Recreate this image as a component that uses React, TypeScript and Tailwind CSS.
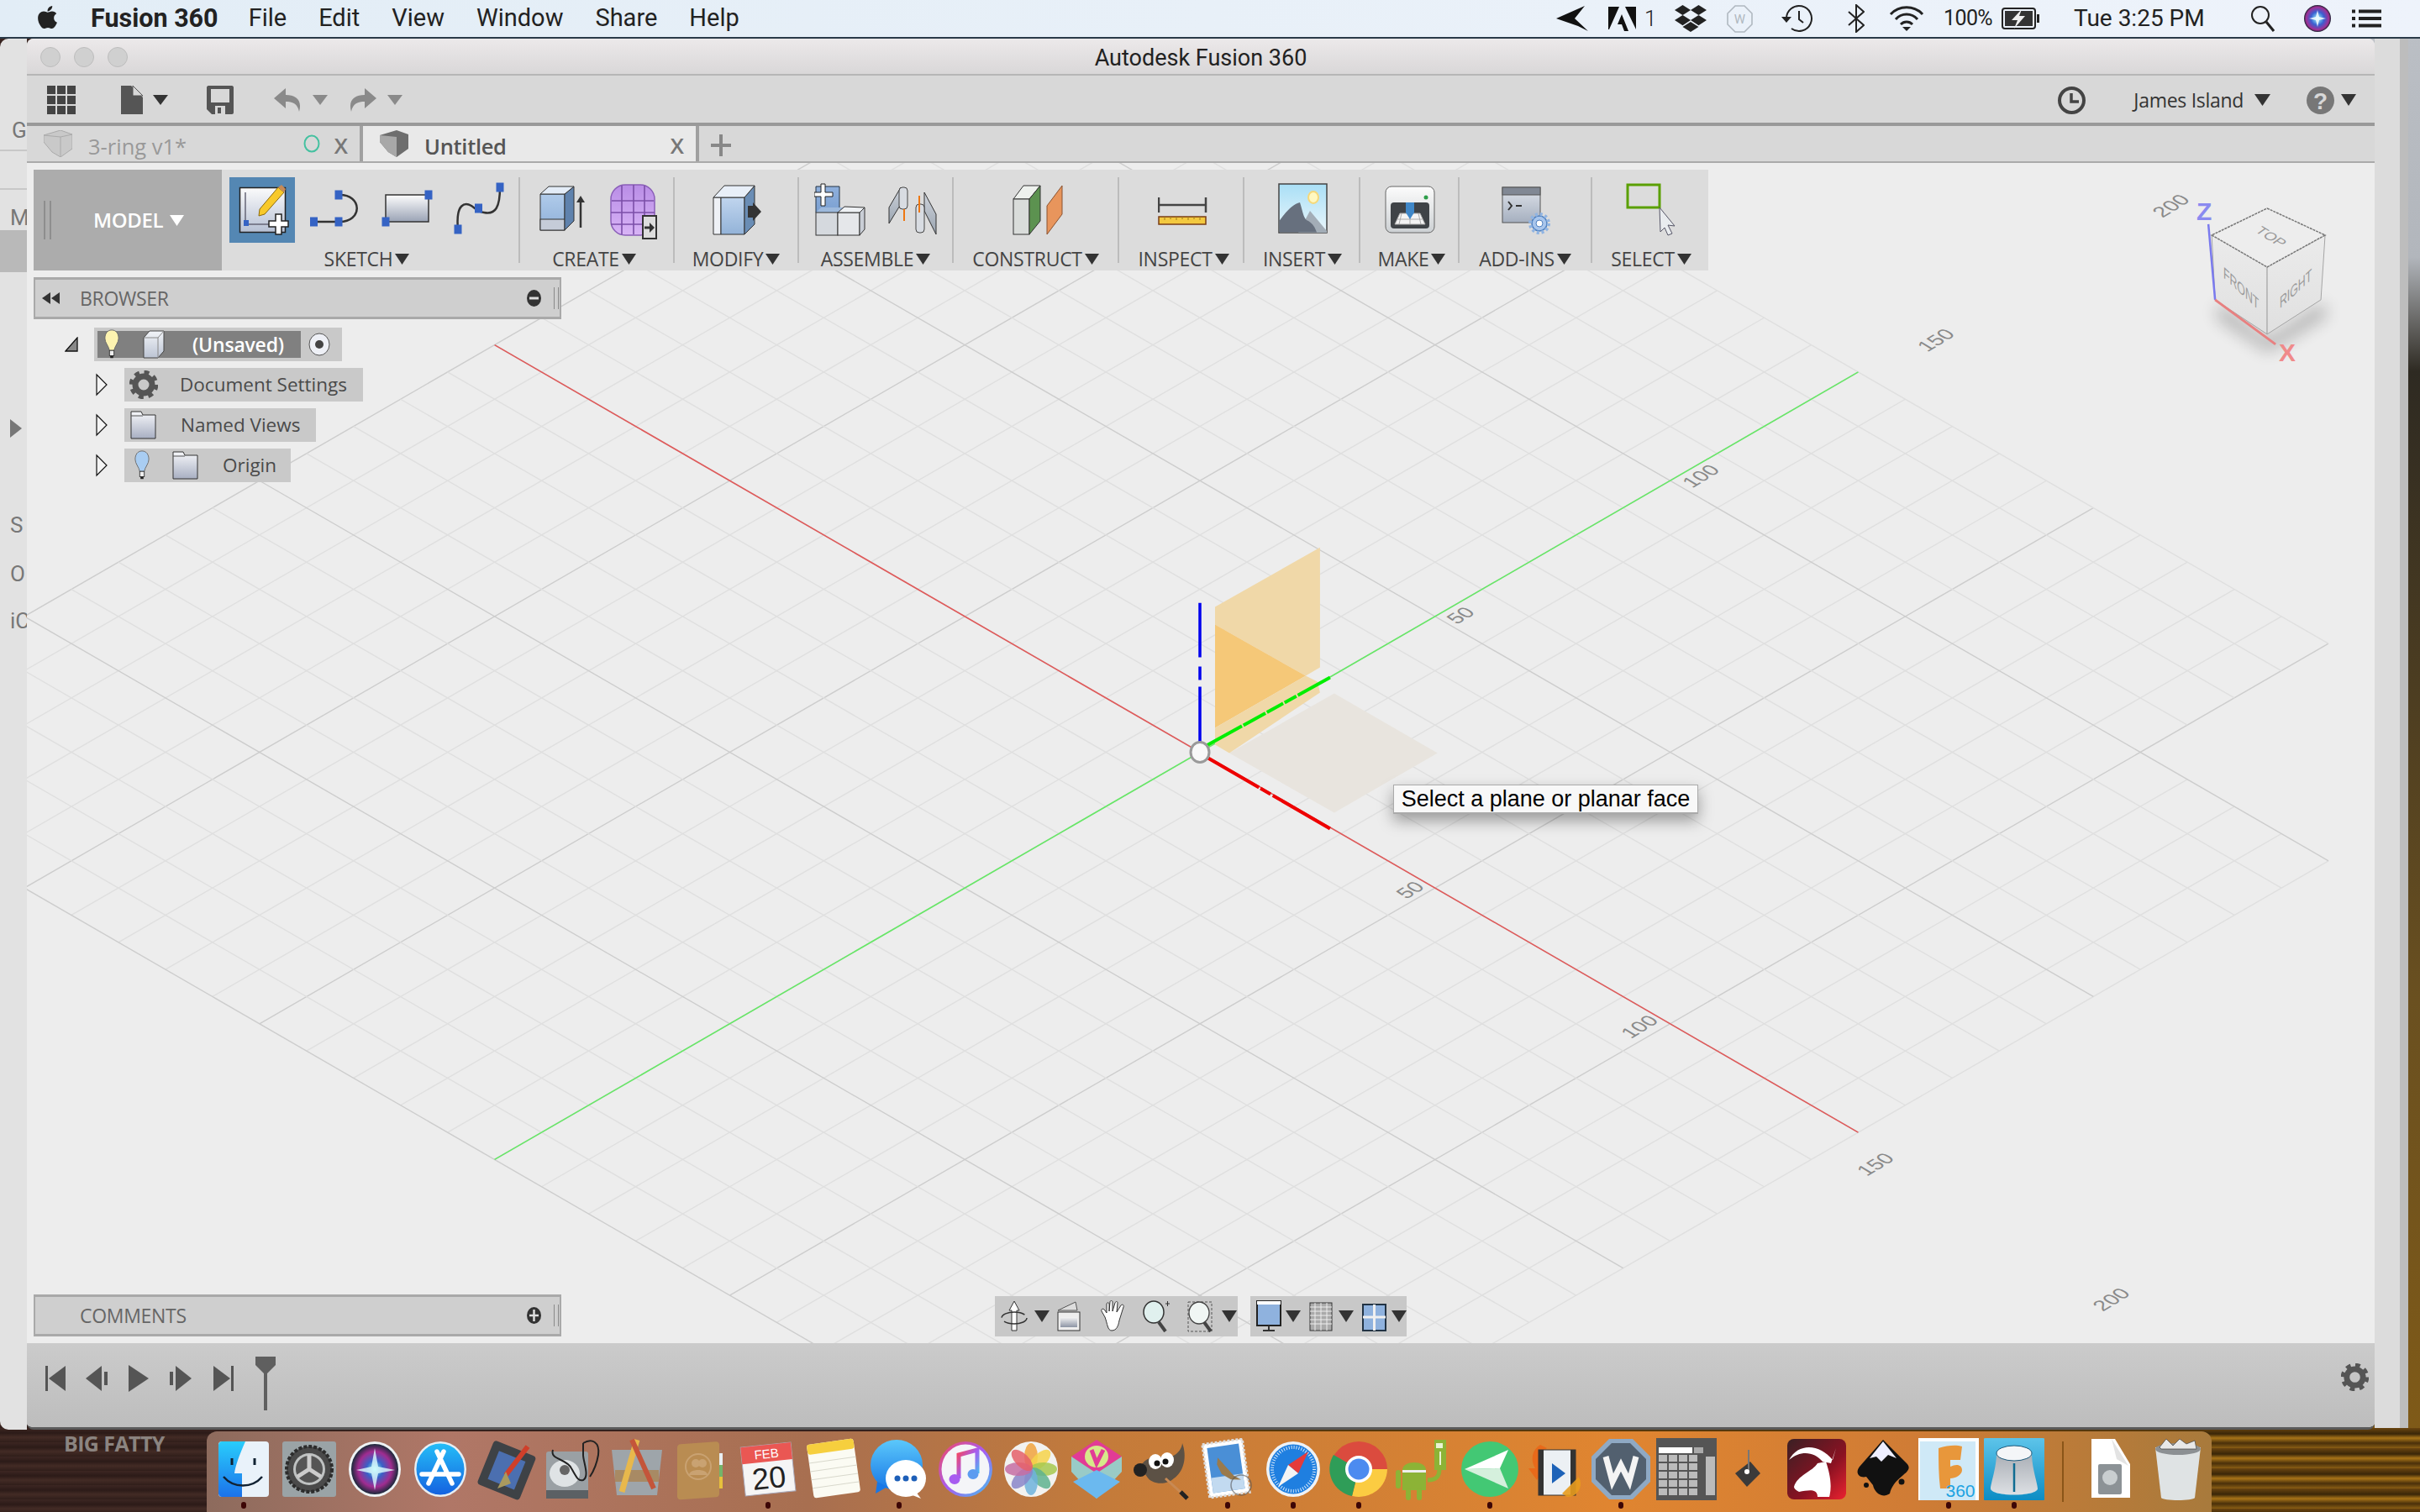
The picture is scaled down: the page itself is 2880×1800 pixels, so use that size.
import React from "react";
import { FaApple, FaDropbox } from "react-icons/fa";

const sans = "font-['Open_Sans','Liberation_Sans',sans-serif]";
const Tri = ({ w = 18, h = 12, c = "#333", cls = "" }: { w?: number; h?: number; c?: string; cls?: string }) => (
  <svg width={w} height={h} viewBox="0 0 18 12" preserveAspectRatio="none" className={cls}><polygon points="0,0 18,0 9,12" fill={c} /></svg>
);

const P = (i: number, j: number) => [1428 + 56 * (i + j), 896 + 32.35 * (i - j)];

function Canvas3D() {
  const lines: React.ReactNode[] = [];
  for (let i = -15; i <= 14; i++) {
    const jMax = i > 10 ? 10 : 14;
    const a = P(i, -15), b = P(i, jMax);
    lines.push(<line key={"i" + i} x1={a[0]} y1={a[1]} x2={b[0]} y2={b[1]} stroke={i % 5 === 0 ? "#cdcdcd" : "#dfdfdf"} strokeWidth={1.4} />);
  }
  for (let j = -15; j <= 14; j++) {
    const iMax = j > 10 ? 10 : 14;
    const a = P(-15, j), b = P(iMax, j);
    lines.push(<line key={"j" + j} x1={a[0]} y1={a[1]} x2={b[0]} y2={b[1]} stroke={j % 5 === 0 ? "#cdcdcd" : "#dfdfdf"} strokeWidth={1.4} />);
  }
  const lab = (t: string, x: number, y: number) => (
    <text key={t + x} transform={`matrix(.82 -.5 .82 .5 ${x} ${y})`} fontSize="25" fill="#8a8a8a" textAnchor="middle" dominantBaseline="middle" fontFamily="Liberation Sans">{t}</text>
  );
  const r1 = P(-15, 0), r2 = P(14, 0), g1 = P(0, -15), g2 = P(0, 14);
  return (
    <svg className="absolute inset-0 w-full h-full" viewBox="32 194 2794 1406">
      {lines}
      <line x1={r1[0]} y1={r1[1]} x2={r2[0]} y2={r2[1]} stroke="#e05a5a" strokeWidth="1.6" />
      <line x1={g1[0]} y1={g1[1]} x2={g2[0]} y2={g2[1]} stroke="#66e866" strokeWidth="1.6" />
      {lab("50", 1740, 734)}{lab("100", 2026, 568)}{lab("150", 2306, 406)}{lab("200", 2586, 246)}
      {lab("50", 1680, 1061)}{lab("100", 1953, 1224)}{lab("150", 2234, 1388)}{lab("200", 2515, 1549)}
      <polygon points="1588,826 1711,897 1588,968 1463,897" fill="#e8e4de" />
      <polygon points="1446,723 1571,652 1571,795 1554,805 1446,744" fill="#f0d8a8" />
      <polygon points="1446,744 1554,805 1446,867" fill="#f5c878" />
      <polygon points="1446,867 1554,805 1568,812 1571,825 1463,897 1446,887" fill="#f0d8a8" />
      <line x1="1428" y1="718" x2="1428" y2="885" stroke="#0000ee" strokeWidth="3.5" strokeDasharray="65 11 16 8 80" />
      <line x1="1436" y1="888" x2="1583" y2="807" stroke="#00ee00" strokeWidth="4" strokeDasharray="48 2 30 2 22 2 16 2 60" />
      <line x1="1436" y1="902" x2="1583" y2="987" stroke="#ee0000" strokeWidth="4" strokeDasharray="72 2 14 3 90" />
      <ellipse cx="1428" cy="896" rx="11" ry="12" fill="#f8f8f8" stroke="#9a9a9a" strokeWidth="3" />
      {/* nav cube */}
      <defs>
        <filter id="cb" x="-50%" y="-50%" width="200%" height="200%"><feGaussianBlur stdDeviation="10" /></filter>
        <linearGradient id="cf" x1="0" y1="0" x2="0" y2="1"><stop offset="0" stopColor="#ebebeb" /><stop offset="1" stopColor="#e0e0e0" /></linearGradient>
      </defs>
      <polygon points="2642,362 2699,405 2765,362 2770,375 2700,418 2640,378" fill="#000" opacity=".3" filter="url(#cb)" />
      <polygon points="2699,318 2633,280 2637,357 2699,398" fill="url(#cf)" stroke="#a5a5a5" strokeWidth="1" />
      <polygon points="2699,318 2768,280 2763,357 2699,398" fill="url(#cf)" stroke="#a5a5a5" strokeWidth="1" />
      <polygon points="2699,248 2768,280 2699,318 2633,280" fill="#ededed" stroke="#777" strokeWidth="1.5" strokeDasharray="3 1" />
      <line x1="2629" y1="267" x2="2637" y2="357" stroke="#7a7aee" strokeWidth="2.5" />
      <line x1="2637" y1="357" x2="2709" y2="410" stroke="#e88080" strokeWidth="3" />
      <text transform="matrix(.8 .5 -.7 .5 2699 285)" fontSize="19" fill="#9a9a9a" textAnchor="middle" fontFamily="Liberation Sans">TOP</text>
      <text transform="matrix(.65 .6 0 1 2668 350)" fontSize="19" fill="#9a9a9a" textAnchor="middle" fontFamily="Liberation Sans">FRONT</text>
      <text transform="matrix(.65 -.6 0 1 2733 350)" fontSize="19" fill="#9a9a9a" textAnchor="middle" fontFamily="Liberation Sans">RIGHT</text>
      <text x="2624" y="262" fontSize="30" fontWeight="bold" fill="#8a8af0" textAnchor="middle" fontFamily="Liberation Sans">Z</text>
      <text x="2723" y="430" fontSize="30" fontWeight="bold" fill="#f08a8a" textAnchor="middle" fontFamily="Liberation Sans">X</text>
    </svg>
  );
}

/* ---------------- ribbon icons (local y 0-78) ---------------- */
const Sq = ({ x, y, s = 9 }: { x: number; y: number; s?: number }) => <rect x={x - s / 2} y={y - s / 2 - 1} width={s} height={s + 2} fill="#3563c4" />;
const I = ({ w = 60, children }: { w?: number; children: React.ReactNode }) => <svg width={w} height={78} viewBox={`0 0 ${w} 78`} className="shrink-0">{children}</svg>;
const G = ({ id, a, b }: { id: string; a: string; b: string }) => (
  <defs><linearGradient id={id} x1="0" y1="0" x2="0" y2="1"><stop offset="0" stopColor={a} /><stop offset="1" stopColor={b} /></linearGradient></defs>
);

const SketchNew = () => (
  <div className="w-[78px] h-[78px] bg-[#5487b3] shrink-0">
    <svg width={78} height={78} viewBox="0 0 78 78">
      <G id="sk" a="#fbfbfb" b="#b6c0d4" />
      <rect x="12.5" y="12.5" width="54" height="53" fill="url(#sk)" stroke="#222" strokeWidth="1.5" />
      <path d="M19 18V56H52" fill="none" stroke="#667" strokeWidth="1.5" />
      <rect x="17" y="51" width="6" height="7" fill="#3563c4" />
      <polygon points="36,38 58,12 65,18 42,44 35,46" fill="#f8c92a" stroke="#8a6a10" strokeWidth="1" />
      <polygon points="58,12 62,9 67,14 65,18" fill="#c68a58" />
      <path d="M55 44h7v8h8v7h-8v9h-7v-9h-8v-7h8z" fill="#fff" stroke="#222" strokeWidth="1.5" />
    </svg>
  </div>
);
const ArcI = () => (<I w={75}><path d="M13 53H43M43 21C72 20 72 54 43 53" fill="none" stroke="#333" strokeWidth="2.5" /><Sq x={13.5} y={53} /><Sq x={43} y={53} /><Sq x={43} y={21} /></I>);
const RectI = () => (<I w={74}><G id="rc" a="#fdfdfd" b="#9aa3b5" /><rect x="11" y="21" width="51" height="32" fill="url(#rc)" stroke="#333" strokeWidth="1.5" /><Sq x={62} y={21} /><Sq x={11} y={53} /></I>);
const SplineI = () => (<I w={75}><path d="M11 62C8 30 20 30 27 34C33 38 35 41 42 42C56 45 61 35 61 12" fill="none" stroke="#333" strokeWidth="2.5" /><Sq x={61} y={12} /><Sq x={35.5} y={37} /><Sq x={11} y={62} /></I>);
const BoxI = () => (<I><G id="bx" a="#b0cbea" b="#8fb0d8" />
  <polygon points="1,20 30,20 30,63 1,63" fill="url(#bx)" stroke="#333" /><rect x="1" y="50" width="29" height="13" fill="#c5ccd8" stroke="#333" />
  <polygon points="30,20 41,11 41,52 30,63" fill="#5f82ad" stroke="#333" /><polygon points="1,20 11,11 41,11 30,20" fill="#e3ecf7" stroke="#333" />
  <path d="M49 60V28" stroke="#333" strokeWidth="2.5" /><polygon points="44,30 49,22 54,30" fill="#333" /></I>);
const PurpleI = () => (<I><G id="pu" a="#b98de6" b="#d8b4f6" />
  <rect x="1" y="9" width="52" height="60" rx="17" fill="url(#pu)" stroke="#8a5fb8" strokeWidth="1.5" />
  <path d="M2 28H52M1 42H53M1 56H45M14 10V68M28 9V68M41 10V60" stroke="#7b4fa8" strokeWidth="1.6" fill="none" />
  <rect x="39" y="46" width="16" height="27" fill="#ddd" stroke="#333" strokeWidth="2" /><path d="M41 60H48" stroke="#333" strokeWidth="3" /><polygon points="47,54 53,60 47,66" fill="#333" /></I>);
const ModifyI = () => (<I><G id="mo" a="#c0d5ee" b="#93b3d8" />
  <polygon points="1,24 10,24 10,68 1,68" fill="#eef1f6" stroke="#333" /><polygon points="10,24 38,24 38,68 10,68" fill="url(#mo)" stroke="#333" />
  <polygon points="38,24 50,10 50,56 38,68" fill="#6a8db5" stroke="#333" /><polygon points="1,24 14,10 50,10 38,24" fill="#e8eff8" stroke="#333" />
  <rect x="42" y="34" width="8" height="14" fill="#333" /><polygon points="48,30 58,41 48,52" fill="#333" /></I>);
const AssembleI = () => (<I w={87}><G id="as" a="#8fb0dc" b="#7ba0d2" />
  <polygon points="2,11 30,11 30,42 2,42" fill="url(#as)" stroke="#234" /><polygon points="2,42 30,42 38,36 8,36" fill="#9db9dc" />
  <rect x="2" y="42" width="26" height="27" fill="#d5d9de" stroke="#333" /><rect x="28" y="42" width="26" height="27" fill="#e5e7ea" stroke="#333" /><polygon points="54,42 60,36 60,62 54,69" fill="#c9ced6" stroke="#333" />
  <polygon points="28,42 36,35 60,36 54,42" fill="#eef1f4" stroke="#333" />
  <path d="M8 8h5v10h9v5h-9v11H8V23H0v-5h8z" fill="#fff" stroke="#222" /></I>);
const JointI = () => (<I w={60}><G id="jn" a="#cfd4dc" b="#9aa4b0" />
  <polygon points="2,55 16,32 16,12 2,36" fill="url(#jn)" stroke="#333" /><rect x="14" y="12" width="10" height="26" rx="4" fill="#d8dce2" stroke="#444" />
  <polygon points="58,68 44,40 44,18 58,44" fill="url(#jn)" stroke="#333" /><rect x="34" y="32" width="10" height="34" rx="4" fill="#d8dce2" stroke="#444" />
  <path d="M38 22V42M20 38V52" stroke="#ee7711" strokeWidth="2" fill="none" /></I>);
const ConstructI = () => (<I><polygon points="1,26 13,10 33,10 20,26" fill="#eef1ee" stroke="#333" /><rect x="1" y="26" width="19" height="42" fill="#d9dcda" stroke="#333" />
  <polygon points="20,26 33,10 33,52 20,68" fill="#5c9250" stroke="#333" /><polygon points="41,34 59,10 59,44 41,68" fill="#e8955c" stroke="#8a5230" /></I>);
const InspectI = () => (<I><path d="M1 24V42M57 24V42M1 33H57" stroke="#444" strokeWidth="2.5" fill="none" /><rect x="1" y="43" width="56" height="9" fill="#f3c93f" stroke="#7a3d14" strokeWidth="1.5" transform="translate(0,4)" /><path d="M8 47v4M15 47v3M22 47v4M29 47v3M36 47v4M43 47v3M50 47v4" stroke="#a07c1a" /></I>);
const InsertI = () => (<I><G id="sky" a="#a9dff6" b="#eaf6fb" /><rect x="1" y="8" width="57" height="58" fill="url(#sky)" stroke="#444" strokeWidth="1.5" />
  <ellipse cx="42" cy="24" rx="6" ry="7" fill="#fff8c0" stroke="#f5d87a" strokeWidth="2" /><polygon points="38,40 58,64 58,66 24,66" fill="#a3adb7" /><path d="M1.5 65.5V52C10 40 18 32 26 30C30 42 30 50 36 52C42 56 44 60 46 65.5Z" fill="#67707e" /></I>);
const MakeI = () => (<I><G id="mk" a="#fcfcfc" b="#ccd0d3" /><rect x="1" y="11" width="58" height="55" rx="7" fill="url(#mk)" stroke="#666" />
  <rect x="7" y="30" width="46" height="31" rx="4" fill="#3f4347" /><circle cx="49" cy="24" r="2.5" fill="#2e9e4a" />
  <polygon points="12,56 18,43 42,43 48,56" fill="#f4f4f4" stroke="#aaa" /><path d="M15 50H45M20 43L17 56M30 43V56M40 43L43 56" stroke="#aaa" /><polygon points="25,30 35,30 35,42 30,50 25,42" fill="#3f87c8" /></I>);
const AddinsI = () => (<I><G id="ad" a="#dfe3ea" b="#a5afbf" /><rect x="1" y="12" width="45" height="42" fill="url(#ad)" stroke="#555" /><rect x="1" y="12" width="45" height="9" fill="#818894" stroke="#555" />
  <path d="M8 29L12 34L8 39M17 34H24" fill="none" stroke="#333" strokeWidth="2" />
  <g transform="translate(45,55)"><circle r="9" fill="#a9c6ec" stroke="#4d7fbf" strokeWidth="1.5" /><circle r="11" fill="none" stroke="#90b4e2" strokeWidth="4" strokeDasharray="3 2.8" /><circle r="4" fill="#fff" stroke="#4d7fbf" /></g></I>);
const SelectI = () => (<I><rect x="2" y="9" width="38" height="27" fill="none" stroke="#5aa000" strokeWidth="3" />
  <polygon points="40,36 58,58 50,57 55,67 50,69 46,60 41,65" fill="#e9ecef" stroke="#556" /></I>);

function Group({ w, label, pl, children, lx = "" }: { w: string; label: string; pl: string; children?: React.ReactNode; lx?: string }) {
  return (
    <div className={`${w} h-full flex flex-col pt-[9px] shrink-0`}>
      <div className={`${pl} h-[78px] flex items-start`}>{children}</div>
      <div className={`mt-[6px] h-[26px] flex justify-center items-center gap-[3px] text-[23px] text-[#444] leading-none tracking-[-0.3px] ${sans} ${lx}`}>
        <span>{label}</span><Tri w={17} h={13} c="#333" />
      </div>
    </div>
  );
}
const Sep = () => <div className="w-[2px] h-[102px] bg-[#bcbcbc] shrink-0" />;

function Ribbon() {
  return (
    <div className="flex items-center h-[120px] w-[1993px] bg-[#dcdcdc] shrink-0">
      <div className="w-[224px] h-full bg-[#acacac] flex items-center shrink-0 pl-[12px]">
        <div className="w-[9px] h-[46px] border-x-2 border-[#8e8e8e]" />
        <div className={`ml-[50px] flex items-center gap-[8px] text-white font-semibold text-[24px] ${sans} tracking-[-0.4px]`}>MODEL<Tri w={17} h={13} c="#fff" /></div>
      </div>
      <Group w="w-[353px]" label="SKETCH" pl="pl-[9px]" lx="-translate-x-[4px]">
        <SketchNew /><div className="ml-[9px]"><ArcI /></div><div className="ml-[13px]"><RectI /></div><div className="ml-[12px]"><SplineI /></div>
      </Group><Sep />
      <Group w="w-[182px]" label="CREATE" pl="pl-[23px]" lx="-translate-x-[3px]"><BoxI /><div className="ml-[24px]"><PurpleI /></div></Group><Sep />
      <Group w="w-[146px]" label="MODIFY" pl="pl-[45px]" lx="translate-x-[0px]"><ModifyI /></Group><Sep />
      <Group w="w-[182px]" label="ASSEMBLE" pl="pl-[18px]"><AssembleI /><JointI /></Group><Sep />
      <Group w="w-[195px]" label="CONSTRUCT" pl="pl-[70px]" lx="translate-x-[0px]"><ConstructI /></Group><Sep />
      <Group w="w-[147px]" label="INSPECT" pl="pl-[46px]" lx="translate-x-[3px]"><InspectI /></Group><Sep />
      <Group w="w-[136px]" label="INSERT" pl="pl-[40px]" lx="translate-x-[1px]"><InsertI /></Group><Sep />
      <Group w="w-[116px]" label="MAKE" pl="pl-[29px]" lx="translate-x-[3px]"><MakeI /></Group><Sep />
      <Group w="w-[156px]" label="ADD-INS" pl="pl-[50px]" lx="translate-x-[0px]"><AddinsI /></Group><Sep />
      <Group w="w-[138px]" label="SELECT" pl="pl-[40px]" lx="translate-x-[1px]"><SelectI /></Group>
    </div>
  );
}

/* ---------------- browser ---------------- */
const Bulb = ({ c, size = 40 }: { c: string; size?: number }) => (
  <svg width={size * 0.5} height={size} viewBox="0 0 20 40"><path d="M10 1C4 1 1 6 1 12c0 6 5 10 6 16h6c1-6 6-10 6-16C19 6 16 1 10 1z" fill={c} stroke="#666" /><rect x="7" y="28" width="6" height="7" fill="#eee" stroke="#333" /><rect x="8" y="35" width="4" height="3" fill="#222" /></svg>
);
const Folder = () => (
  <svg width={31} height={34} viewBox="0 0 31 34"><G id="fd" a="#f6f7fa" b="#a8afc2" /><path d="M1 33V1h12l2 4h15v28z" fill="url(#fd)" stroke="#333" /><path d="M1 6H15" stroke="#555" /></svg>
);
const Gear = ({ s = 34, c = "#555" }: { s?: number; c?: string }) => (
  <svg width={s} height={s} viewBox="0 0 34 34">
    <circle cx="17" cy="17" r="10" fill="none" stroke={c} strokeWidth="7" />
    <circle cx="17" cy="17" r="15" fill="none" stroke={c} strokeWidth="4.5" strokeDasharray="6 5.8" />
  </svg>
);
const Exp = () => <svg width={14} height={28} viewBox="0 0 14 28"><polygon points="1,2 13,14 1,26" fill="#f4f4f4" stroke="#111" strokeWidth="1.2" /></svg>;
const Cube = () => (
  <svg width={26} height={34} viewBox="0 0 26 34"><G id="cu" a="#f2f4f8" b="#bcc4d4" /><polygon points="1,9 8,1 25,1 25,25 18,33 1,33" fill="url(#cu)" stroke="#444" /><path d="M1 9H18V33M18 9L25 1" stroke="#888" fill="none" /></svg>
);
function Tree() {
  const row = `flex items-center h-[40px] bg-[#c9c9c9] text-[#4a4a4a] text-[22.5px] ${sans}`;
  return (
    <div className="flex flex-col mt-[10px] gap-[8px]">
      <div className="flex items-center h-[40px]">
        <svg width={16} height={18} viewBox="0 0 16 18" className="ml-[37px]"><polygon points="1,17 15,1 15,17" fill="#888" stroke="#111" strokeWidth="1.3" /></svg>
        <div className="ml-[19px] h-[40px] w-[295px] bg-[#c9c9c9] pl-[4px] flex items-center">
          <div className="h-[32px] w-[242px] bg-[#808080] flex items-center pl-[8px] shrink-0">
            <Bulb c="#fdf3b0" size={36} />
            <div className="ml-[28px]"><Cube /></div>
            <span className={`ml-[33px] text-white font-semibold text-[23px] tracking-[-0.2px] ${sans}`}>(Unsaved)</span>
          </div>
          <svg width={26} height={28} viewBox="0 0 26 28" className="ml-[9px]"><ellipse cx="13" cy="14" rx="12" ry="13" fill="#eef0f6" stroke="#555" /><circle cx="13" cy="14" r="5" fill="#444" /></svg>
        </div>
      </div>
      <div className="flex items-center ml-[74px]"><Exp /><div className={`${row} ml-[20px] w-[284px] pl-[6px]`}><Gear /><span className="ml-[26px]">Document Settings</span></div></div>
      <div className="flex items-center ml-[74px]"><Exp /><div className={`${row} ml-[20px] w-[228px] pl-[7px]`}><Folder /><span className="ml-[29px]">Named Views</span></div></div>
      <div className="flex items-center ml-[74px]"><Exp /><div className={`${row} ml-[20px] w-[198px] pl-[12px]`}><Bulb c="#a9cdf2" size={36} /><div className="ml-[27px]"><Folder /></div><span className="ml-[29px]">Origin</span></div></div>
    </div>
  );
}
const Panel = ({ title, sign, rewind }: { title: string; sign: string; rewind?: boolean }) => (
  <div className="relative h-[50px] w-[628px] bg-[#cfcfcf] border-2 border-t-[3px] border-b-[3px] border-[#a9a9a9] flex items-center">
    <div className="w-[53px] pl-[8px] flex">{rewind && <svg width={21} height={14} viewBox="0 0 21 14"><polygon points="10,0 10,14 0,7" fill="#333" /><polygon points="21,0 21,14 11,7" fill="#333" /></svg>}</div>
    <span className={`text-[23px] text-[#666] tracking-[-0.3px] ${sans}`}>{title}</span>
    <div className="ml-auto mr-[1px] flex items-center gap-[15px]">
      <svg width={17} height={20} viewBox="0 0 17 20"><ellipse cx="8.5" cy="10" rx="8.5" ry="10" fill="#333" />{sign === "-" ? <rect x="3" y="8.5" width="11" height="3" fill="#ddd" /> : <path d="M3 10H14M8.5 3V17" stroke="#ddd" strokeWidth="2.5" />}</svg>
      <div className="w-[6px] h-[26px] border-x-[1.5px] border-[#8a8a8a]" />
    </div>
  </div>
);

/* ---------------- nav bar ---------------- */
const Nv = ({ w, children }: { w: number; children: React.ReactNode }) => <svg width={w} height={38} viewBox={`0 0 ${w} 38`} className="shrink-0">{children}</svg>;
function NavBar() {
  return (
    <div className="absolute left-[1152px] bottom-[8px] flex gap-[15px]">
      <div className="w-[289px] h-[48px] bg-[#c8c8c8] flex items-center pl-[7px]">
        <Nv w={32}><path d="M16 1L22 12H19V36H13V12H10z" fill="#fff" stroke="#333" /><ellipse cx="16" cy="21" rx="15" ry="7" fill="none" stroke="#333" strokeWidth="1.5" strokeDasharray="30 6" /></Nv>
        <Tri cls="ml-[8px]" w={18} h={14} />
        <div className="ml-[9px]"><Nv w={28}><G id="lk" a="#f5f5f5" b="#8d95a5" /><rect x="1" y="14" width="26" height="22" fill="#eee" stroke="#333" /><rect x="4" y="20" width="20" height="12" fill="url(#lk)" /><polygon points="1,12 22,2 24,12" fill="#ddd" stroke="#555" /></Nv></div>
        <div className="ml-[23px]"><Nv w={30}><path d="M6 20L2 13C1 10 4 9 6 12L8 15V5C8 2 11 2 11 5V13L12 2C12 0 15 0 15 2V13L18 3C19 1 21 1 21 3L20 14L25 6C27 4 29 6 28 8L23 24C22 30 20 36 14 36C9 36 9 28 6 20Z" fill="#fff" stroke="#333" /></Nv></div>
        <div className="ml-[21px]"><Nv w={32}><ellipse cx="13" cy="14" rx="12" ry="13" fill="#e0f0ee" stroke="#333" strokeWidth="1.5" /><path d="M19 26L27 37" stroke="#444" strokeWidth="4" /><path d="M27 4H32M29.5 1V7" stroke="#333" /></Nv></div>
        <div className="ml-[21px]"><Nv w={30}><rect x="1" y="2" width="28" height="35" fill="none" stroke="#555" strokeDasharray="3 2" /><ellipse cx="14" cy="15" rx="12" ry="13" fill="#f0f6f4" stroke="#444" strokeWidth="1.3" /><path d="M20 26L28 37" stroke="#444" strokeWidth="4" /></Nv></div>
        <Tri cls="ml-[11px]" w={18} h={14} />
      </div>
      <div className="w-[186px] h-[48px] bg-[#c8c8c8] flex items-center pl-[7px]">
        <Nv w={30}><rect x="1" y="1" width="28" height="29" fill="#8fb2de" stroke="#222" strokeWidth="2" /><rect x="1" y="1" width="28" height="4" fill="#fff" /><path d="M15 30V35M8 36H22" stroke="#333" strokeWidth="2" /></Nv>
        <Tri cls="ml-[5px]" w={18} h={14} />
        <div className="ml-[10px]"><Nv w={28}><rect x="1" y="3" width="26" height="33" fill="#aaa" stroke="#333" /><path d="M1 8H27M1 13H27M1 18H27M1 23H27M1 28H27M7 3V36M14 3V36M21 3V36" stroke="#eee" /></Nv></div>
        <Tri cls="ml-[7px]" w={18} h={14} />
        <div className="ml-[10px]"><Nv w={29}><rect x="1" y="5" width="27" height="31" fill="#8fb2de" stroke="#234" strokeWidth="2" /><path d="M14.5 5V36M1 20H28" stroke="#f0f0f0" strokeWidth="3" /></Nv></div>
        <Tri cls="ml-[6px]" w={18} h={14} />
      </div>
    </div>
  );
}

/* ---------------- dock ---------------- */
const D = ({ children }: { children: React.ReactNode }) => <svg width={72} height={74} viewBox="0 0 72 74">{children}</svg>;
const petals = ["#f1a33d", "#f6d34a", "#a6c94f", "#5fb38f", "#6fb3dc", "#8a86c9", "#c56da3", "#e5606a"];
const icons: { el: React.ReactNode; dot?: boolean }[] = [
  { dot: true, el: <D><defs><linearGradient id="fi" x1="0" y1="0" x2="0" y2="1"><stop offset="0" stopColor="#29cdfc" /><stop offset="1" stopColor="#1b72ea" /></linearGradient></defs><rect x="6" y="4" width="60" height="66" rx="4" fill="#e9f2fa" /><path d="M10 4H38C30 22 26 34 25 42H34V70H10C8 70 6 68 6 66V8C6 6 8 4 10 4Z" fill="url(#fi)" /><path d="M12 46C24 60 46 60 58 46" fill="none" stroke="#123" strokeWidth="2.5" /><path d="M22 24V32M49 24V32" stroke="#123" strokeWidth="3" /></D> },
  { el: <D><rect x="4" y="4" width="64" height="66" rx="3" fill="#9aa3a6" /><circle cx="36" cy="37" r="27" fill="#4a4a4a" stroke="#2c2c2c" strokeWidth="4" strokeDasharray="4 2" /><circle cx="36" cy="37" r="19" fill="#bfc2c2" /><circle cx="36" cy="37" r="16" fill="#555" /><path d="M36 37V20M36 37L50 46M36 37L22 46" stroke="#ccc" strokeWidth="5" /></D> },
  { el: <D><defs><radialGradient id="si"><stop offset="0" stopColor="#7ffbea" /><stop offset=".35" stopColor="#3a60c8" /><stop offset=".7" stopColor="#a02c90" /><stop offset="1" stopColor="#1a2a3a" /></radialGradient></defs><ellipse cx="36" cy="37" rx="31" ry="33" fill="#eef2f4" /><ellipse cx="36" cy="37" rx="28" ry="30" fill="url(#si)" /><path d="M36 12L40 34L60 38L40 42L36 62L32 42L14 38L32 34Z" fill="#dffcff" opacity=".8" /></D> },
  { el: <D><defs><linearGradient id="ap" x1="0" y1="0" x2="0" y2="1"><stop offset="0" stopColor="#25bdf7" /><stop offset="1" stopColor="#1462e0" /></linearGradient></defs><ellipse cx="36" cy="37" rx="31" ry="33" fill="#e8eef2" /><ellipse cx="36" cy="37" rx="28.5" ry="30.5" fill="url(#ap)" /><path d="M40 16L22 54M32 16L50 54M14 43H58" stroke="#fff" strokeWidth="5.5" strokeLinecap="round" /></D> },
  { el: <D><g transform="rotate(22 36 38)"><rect x="10" y="10" width="54" height="56" rx="4" fill="#3e4246" /><rect x="20" y="20" width="34" height="36" fill="#4b6fb0" /></g><path d="M62 10L36 44" stroke="#cf3f2a" strokeWidth="6" /><path d="M36 40L26 60L42 54Z" fill="#a99a5f" /></D> },
  { el: <D><rect x="6" y="16" width="50" height="56" rx="3" fill="#9aa0a4" /><rect x="6" y="62" width="50" height="10" fill="#5b6064" /><ellipse cx="28" cy="42" rx="18" ry="16" fill="#dfe3e5" /><circle cx="28" cy="38" r="6" fill="#666" /><path d="M14 14C10 26 30 24 36 36C42 46 44 52 50 50C58 46 50 28 50 20M50 20V6M50 6C60 0 70 4 68 20C66 32 62 40 58 46" fill="none" stroke="#222" strokeWidth="2" /></D> },
  { el: <D><polygon points="6,14 66,14 60,68 12,68" fill="#9ea5aa" /><rect x="10" y="38" width="52" height="14" fill="#a88a64" /><path d="M36 2L18 64" stroke="#e8b84c" strokeWidth="7" /><path d="M30 2L56 60" stroke="#c4553a" strokeWidth="6" /></D> },
  { el: <D><rect x="6" y="4" width="50" height="66" rx="4" fill="#b98c52" transform="skewY(-4) translate(0,4)" /><rect x="56" y="18" width="4" height="14" fill="#e8eef2" /><rect x="56" y="32" width="4" height="14" fill="#74b46a" /><rect x="56" y="46" width="4" height="14" fill="#e6c03c" /><circle cx="31" cy="34" r="15" fill="none" stroke="#c9a272" strokeWidth="2" /><circle cx="28" cy="30" r="5" fill="#c9a272" /><circle cx="36" cy="30" r="5" fill="#c9a272" /><path d="M20 44C20 36 42 36 42 44" fill="#c9a272" /></D> },
  { dot: true, el: <D><g transform="rotate(-6 36 36)"><rect x="6" y="8" width="60" height="58" fill="#f5f5f5" stroke="#aab" /><rect x="6" y="8" width="60" height="20" fill="#ea5753" /><text x="36" y="24" textAnchor="middle" fontSize="15" fill="#fff" fontFamily="Liberation Sans">FEB</text><text x="36" y="60" textAnchor="middle" fontSize="36" fill="#222" fontFamily="Liberation Sans">20</text></g></D> },
  { el: <D><g transform="rotate(-8 36 36)"><rect x="8" y="4" width="56" height="64" rx="3" fill="#fbfbf3" /><rect x="8" y="4" width="56" height="12" rx="3" fill="#f6cf3e" /><path d="M8 26H64M8 36H64M8 46H64M8 56H64" stroke="#d8d8cc" /></g></D> },
  { dot: true, el: <D><defs><linearGradient id="ms" x1="0" y1="0" x2="0" y2="1"><stop offset="0" stopColor="#5bc8fb" /><stop offset="1" stopColor="#1877e6" /></linearGradient></defs><ellipse cx="33" cy="32" rx="31" ry="30" fill="url(#ms)" /><path d="M10 52L8 66L22 58Z" fill="#1877e6" /><ellipse cx="44" cy="48" rx="24" ry="22" fill="#fff" /><path d="M56 64L62 72L52 68Z" fill="#fff" /><circle cx="34" cy="48" r="3.5" fill="#1d5fb8" /><circle cx="44" cy="48" r="3.5" fill="#1d5fb8" /><circle cx="54" cy="48" r="3.5" fill="#1d5fb8" /></D> },
  { el: <D><defs><linearGradient id="it" x1="0" y1="0" x2="1" y2="1"><stop offset="0" stopColor="#f5475e" /><stop offset=".5" stopColor="#a75cf0" /><stop offset="1" stopColor="#3fc5f0" /></linearGradient></defs><ellipse cx="36" cy="37" rx="32" ry="33" fill="url(#it)" /><ellipse cx="36" cy="37" rx="28.5" ry="29.5" fill="#f4f5f8" /><path d="M28 48V20L50 14V42" fill="none" stroke="url(#it)" strokeWidth="5" /><ellipse cx="23" cy="49" rx="6.5" ry="6" fill="#a75cf0" /><ellipse cx="45" cy="43" rx="6.5" ry="6" fill="#5c9cf0" /></D> },
  { el: <D><ellipse cx="36" cy="37" rx="32" ry="33" fill="#f2f2f0" />{petals.map((c, i) => <ellipse key={c} cx="36" cy="20" rx="8" ry="16" fill={c} opacity=".85" transform={`rotate(${i * 45} 36 37) translate(0,2)`} />)}</D> },
  { el: <D><polygon points="36,2 66,22 36,42 6,22" fill="#e23b96" /><polygon points="6,22 36,42 66,22 66,40 36,72 6,40" fill="#8fe0ea" opacity=".8" /><polygon points="36,38 64,52 36,72 8,52" fill="#6bb9ef" /><ellipse cx="36" cy="22" rx="14" ry="13" fill="#d6e88a" /><path d="M30 14L36 30L44 14" fill="none" stroke="#e23b96" strokeWidth="5" /></D> },
  { el: <D><path d="M10 34C18 20 30 22 46 22C56 20 60 10 60 6C66 22 62 40 50 48C42 56 24 56 18 46Z" fill="#5c5145" /><ellipse cx="10" cy="38" rx="8" ry="8" fill="#222" /><ellipse cx="28" cy="28" rx="8" ry="9" fill="#fff" /><ellipse cx="42" cy="26" rx="8" ry="9" fill="#fff" /><circle cx="30" cy="30" r="3.5" fill="#111" /><circle cx="40" cy="28" r="3.5" fill="#111" /><path d="M40 48L62 68" stroke="#c88a54" strokeWidth="3" /><path d="M58 64L66 72" stroke="#222" strokeWidth="5" /></D> },
  { dot: true, el: <D><g transform="rotate(-8 34 36)"><rect x="10" y="4" width="48" height="64" fill="#fff" stroke="#ddd" strokeDasharray="3 2" strokeWidth="3" /><rect x="15" y="9" width="38" height="54" fill="#4a8fd6" /><rect x="15" y="45" width="38" height="18" fill="#c2daf0" /><path d="M26 22L42 46L50 52L38 50L28 42L24 30Z" fill="#9a7a4c" /></g><circle cx="52" cy="56" r="12" fill="none" stroke="#555" strokeWidth="1.5" opacity=".6" /></D> },
  { dot: true, el: <D><ellipse cx="36" cy="37" rx="32" ry="33" fill="#eef2f6" /><ellipse cx="36" cy="37" rx="28.5" ry="29.5" fill="#1f7fe0" /><ellipse cx="36" cy="37" rx="25" ry="26" fill="none" stroke="#d5e8fa" strokeWidth="4" strokeDasharray="1 2" /><polygon points="54,16 30,32 42,42" fill="#e43b3b" /><polygon points="18,58 30,32 42,42" fill="#f4f4f4" /></D> },
  { dot: true, el: <D><ellipse cx="36" cy="37" rx="34" ry="33" fill="#db4b3e" /><path d="M36 37L70 37A34 33 0 0 1 28 69Z" fill="#fbcc42" /><path d="M36 37L28 69A34 33 0 0 1 6 20Z" fill="#2f9d58" /><ellipse cx="36" cy="37" rx="16" ry="16" fill="#fff" /><ellipse cx="36" cy="37" rx="12.5" ry="12.5" fill="#4c8bf0" /></D> },
  { el: <D><path d="M10 38C10 26 38 26 38 38Z" fill="#8cb336" /><rect x="10" y="40" width="28" height="22" fill="#8cb336" /><rect x="2" y="38" width="6" height="22" rx="3" fill="#8cb336" /><rect x="14" y="60" width="6" height="14" rx="3" fill="#8cb336" /><rect x="27" y="60" width="6" height="14" rx="3" fill="#8cb336" /><rect x="48" y="2" width="14" height="36" fill="#8cb336" /><path d="M40 50C52 50 54 44 54 36" stroke="#8cb336" strokeWidth="5" fill="none" /><rect x="50" y="6" width="8" height="6" fill="#eaf3d4" /><path d="M55 16V32" stroke="#eaf3d4" strokeWidth="2" /><rect x="10" y="38" width="28" height="3" fill="#eee" /></D> },
  { dot: true, el: <D><ellipse cx="36" cy="37" rx="34" ry="33" fill="#43c874" /><polygon points="6,37 58,14 48,36" fill="#fff" /><polygon points="6,37 48,36 58,60" fill="#d5f0dd" /></D> },
  { el: <D><path d="M18 8C8 14 6 26 12 36L4 36L14 50L24 36L18 36C14 26 18 16 26 12Z" fill="#e86a1a" /><rect x="16" y="14" width="44" height="54" fill="#ecf0f4" stroke="#333" /><rect x="16" y="14" width="6" height="54" fill="#333" /><rect x="54" y="14" width="6" height="54" fill="#333" /><polygon points="32,30 48,42 32,54" fill="#1d62b8" /><path d="M62 44C70 52 66 70 50 70L44 66L64 46Z" fill="#e89b1e" opacity=".9" /></D> },
  { dot: true, el: <D><polygon points="22,1 50,1 71,22 71,52 50,73 22,73 1,52 1,22" fill="#8fa9c4" /><polygon points="25,6 47,6 66,25 66,49 47,68 25,68 6,49 6,25" fill="#52606f" /><path d="M18 22L26 52L36 32L46 52L54 22" fill="none" stroke="#f4f4f4" strokeWidth="7" /></D> },
  { el: <D><rect x="0" y="0" width="72" height="74" fill="#555" /><rect x="3" y="11" width="40" height="7" fill="#fff" /><rect x="45" y="11" width="11" height="7" fill="#aaa" />{[24, 34, 44, 54, 64].map(y => [3, 15, 27, 39].map(x => <rect key={`${x}-${y}`} x={x} y={y - 4} width="10" height="8" fill="#bbb" />))}<rect x="59" y="22" width="11" height="46" fill="#bbb" /></D> },
  { el: <D><polygon points="16,42 34,28 46,42 30,58" fill="#3a3a3a" /><path d="M32 14V40" stroke="#777" strokeWidth="2" /><circle cx="30" cy="40" r="3" fill="#fff" /></D> },
  { el: <D><defs><linearGradient id="dr" x1="0" y1="0" x2="1" y2="1"><stop offset="0" stopColor="#3a2024" /><stop offset=".6" stopColor="#8a1222" /><stop offset="1" stopColor="#ec2230" /></linearGradient></defs><rect x="0" y="1" width="70" height="72" rx="8" fill="url(#dr)" /><path d="M2 26C14 4 40 8 54 26L58 12L52 30L42 28C32 16 16 14 2 26Z" fill="#fff" /><path d="M8 58C12 44 30 40 36 30L46 28C50 40 54 56 50 70H36C36 60 26 62 14 64C10 62 8 60 8 58Z" fill="#fff" /></D> },
  { el: <D><path d="M36 2L8 34C2 42 8 48 16 46L24 56C26 66 36 72 44 66C46 58 50 52 60 44C68 38 68 34 64 30Z" fill="#111" /><path d="M36 4L20 24L28 22L34 28L42 20L52 24Z" fill="#eef" /><circle cx="58" cy="52" r="3.5" fill="#111" /><circle cx="16" cy="56" r="3" fill="#111" /></D> },
  { dot: true, el: <D><rect x="-2" y="0" width="74" height="74" fill="#fbfdfe" /><rect x="2" y="4" width="66" height="70" fill="#cfe9f7" /><path d="M24 12C36 8 46 8 52 10L50 26L38 26V34C46 30 52 32 52 38C52 44 44 48 38 48V60H26C24 44 24 28 24 12Z" fill="#e8973b" /><text x="50" y="70" textAnchor="middle" fontSize="21" fill="#1ea3e2" fontFamily="Liberation Sans">360</text></D> },
  { dot: true, el: <D><defs><linearGradient id="cy" x1="0" y1="0" x2="0" y2="1"><stop offset="0" stopColor="#5dc4ea" /><stop offset="1" stopColor="#0c8cc4" /></linearGradient><linearGradient id="cz" x1="0" y1="0" x2="0" y2="1"><stop offset="0" stopColor="#a9aeb5" /><stop offset="1" stopColor="#dde0e4" /></linearGradient></defs><rect x="-1" y="0" width="74" height="74" rx="3" fill="url(#cy)" /><path d="M15 18C15 36 8 54 8 60C8 70 64 70 64 60C64 54 57 36 57 18Z" fill="url(#cz)" /><ellipse cx="36" cy="18" rx="21" ry="9" fill="#f4f6f8" stroke="#1c5a7c" /><path d="M36 30V64" stroke="#0f6c92" strokeWidth="2.5" /></D> },
];
function Dock() {
  return (
    <div className="absolute left-[246px] top-[1704px] w-[2386px] h-[96px] rounded-t-[12px] pl-[5px] flex bg-[linear-gradient(90deg,#8d6b5d_0%,#b07767_12%,#a86f50_30%,#c47b3a_45%,#e08530_70%,#d07c35_85%,#a87a3c_100%)]">
      {icons.map((it, i) => (
        <div key={i} className="w-[78.05px] shrink-0 flex flex-col items-center pt-[8px]">
          {it.el}
          {it.dot ? <div className="mt-[2px] w-[6px] h-[8px] rounded-full bg-[#3d0606]" /> : null}
        </div>
      ))}
      <div className="ml-[18px] mt-[12px] w-[2px] h-[72px] bg-[#8a5518] shrink-0" />
      <div className="ml-[31px] mt-[9px] shrink-0">
        <svg width={50} height={72} viewBox="0 0 50 72"><path d="M2 0H30L48 30V70H2Z" fill="#fff" /><path d="M26 0L46 32L32 24Z" fill="#e3e3e3" /><rect x="10" y="30" width="28" height="36" rx="2" fill="#8c9296" /><circle cx="24" cy="46" r="9" fill="#c9ced0" /></svg>
      </div>
      <div className="ml-[27px] mt-[9px] shrink-0">
        <svg width={56} height={74} viewBox="0 0 56 74"><path d="M1 10H55L48 70C46 74 10 74 8 70Z" fill="#dfe3e4" /><ellipse cx="28" cy="12" rx="27" ry="7" fill="#8c9093" /><path d="M6 10L14 0L22 8L30 0L38 6L48 2L50 12H8Z" fill="#e8e8e8" stroke="#444" strokeWidth=".7" /></svg>
      </div>
    </div>
  );
}

export default function App() {
  const rf = "font-['Roboto','Inter',sans-serif]";
  return (
    <div className={`relative w-[2880px] h-[1800px] overflow-hidden ${rf}`}>
      {/* wallpaper */}
      <div className="absolute inset-0 flex">
        <div className="w-1/2 h-full bg-[repeating-linear-gradient(180deg,#3c2622_0px,#2c1b18_6px,#432b25_11px,#301e1a_17px)]" />
        <div className="w-1/2 h-full flex flex-col">
          <div className="flex-1 bg-[linear-gradient(180deg,#bcc0c6_0%,#b2b6bc_18%,#2e2a22_26%,#6a5020_70%,#7f5a18_100%)]" />
          <div className="h-[100px] bg-[repeating-linear-gradient(180deg,#6a4510_0px,#3a2608_7px,#a87418_12px,#4a300a_18px,#8a5e14_24px)]" />
        </div>
      </div>
      <div className="absolute left-[76px] top-[1700px] text-[25px] font-bold text-[#8b8480] tracking-[-0.6px] font-['Open_Sans',sans-serif]">BIG FATTY</div>

      {/* back windows */}
      <div className="absolute left-[2826px] top-[46px] w-[40px] h-[1654px] rounded-br-[8px] flex">
        <div className="w-[30px] h-full bg-[#dcdcdc]" /><div className="w-[10px] h-full bg-[#bdbdbd]" />
      </div>
      <div className="absolute left-0 top-[46px] w-[32px] h-[1656px] rounded-tl-[10px] rounded-bl-[10px] bg-[#e2e2e2] overflow-hidden flex flex-col text-[#777] text-[26px] pl-[12px]">
        <div className="h-[134px] -ml-[12px] border-b-2 border-[#c8c8c8] pl-[14px] pt-[96px] leading-none shrink-0">G</div>
        <div className="h-[46px] -ml-[12px] border-b-2 border-[#c8c8c8] shrink-0" />
        <div className="h-[48px] -ml-[12px] pl-[12px] pt-[20px] leading-none shrink-0">M</div>
        <div className="h-[50px] -ml-[12px] bg-[#b9b9b9] shrink-0" />
        <div className="mt-[175px] -ml-[0px] shrink-0"><svg width={14} height={22} viewBox="0 0 14 22"><polygon points="0,0 14,11 0,22" fill="#777" /></svg></div>
        <div className="mt-[91px] leading-none whitespace-nowrap">S</div>
        <div className="mt-[32px] leading-none whitespace-nowrap">O</div>
        <div className="mt-[30px] leading-none whitespace-nowrap">iC</div>
      </div>

      {/* menu bar */}
      <div className="absolute left-0 top-0 w-full h-[46px] flex items-center border-b-2 border-[#2a3a48] bg-[linear-gradient(90deg,#e2edf6,#e8f0f8_50%,#eef3fb)] text-[#222] text-[29px] pr-[46px]">
        <FaApple className="ml-[41px] -mt-[4px] text-[#222]" size={31} />
        <span className="ml-[36px] font-bold text-[30.5px]">Fusion 360</span>
        <div className="ml-[36px] flex gap-[38px]"><span>File</span><span>Edit</span><span>View</span><span>Window</span><span>Share</span><span>Help</span></div>
        <div className="ml-auto flex items-center h-full text-[28px]">
          <svg width={38} height={30} viewBox="0 0 38 30"><path d="M0 15L34 0L22 15L38 30L26 24Z" fill="#111" /></svg>
          <svg width={33} height={30} viewBox="0 0 33 30" className="ml-[24px]"><path d="M0 28L0 1H13L1 28ZM33 28V1H20ZM16 10L24 30H19L16 22H11Z" fill="#111" /></svg>
          <span className="ml-[10px] w-[10px] text-[26px] font-light">1</span>
          <FaDropbox className="ml-[26px]" size={38} color="#222" />
          <svg width={31} height={33} viewBox="0 0 31 33" className="ml-[24px]"><polygon points="10,1 21,1 30,10 30,23 21,32 10,32 1,23 1,10" fill="none" stroke="#b0b8c0" strokeWidth="1.6" /><text x="15.5" y="22" textAnchor="middle" fontSize="15" fill="#b0b8c0">W</text></svg>
          <svg width={38} height={34} viewBox="0 0 38 34" className="ml-[34px]"><path d="M6 17A15 15 0 1 1 12 29" fill="none" stroke="#222" strokeWidth="2" /><polygon points="0,15 12,15 6,22" fill="#222" /><path d="M21 8V18L26 22" fill="none" stroke="#222" strokeWidth="2" /></svg>
          <svg width={20} height={34} viewBox="0 0 20 34" className="ml-[41px]"><path d="M1 9L19 25L10 33V1L19 9L1 25" fill="none" stroke="#222" strokeWidth="2" /></svg>
          <svg width={42} height={32} viewBox="0 0 42 32" className="ml-[29px]"><path d="M2 11C12 0 30 0 40 11M8 17C15 9 27 9 34 17M14 23C18 19 24 19 28 23" fill="none" stroke="#222" strokeWidth="3" /><polygon points="21,31 16,26 26,26" fill="#222" /></svg>
          <span className="ml-[23px] w-[59px] text-[25px] tracking-[-0.6px] whitespace-nowrap">100%</span>
          <svg width={46} height={26} viewBox="0 0 46 26" className="ml-[10px]"><rect x="1" y="1" width="39" height="24" rx="3" fill="none" stroke="#222" strokeWidth="2" /><rect x="42" y="8" width="3" height="10" fill="#222" /><rect x="4" y="4" width="33" height="18" fill="#333" /><polygon points="24,2 12,15 19,15 15,25 28,10 21,10" fill="#eee" /></svg>
          <span className="ml-[40px] w-[162px] whitespace-nowrap">Tue 3:25 PM</span>
          <svg width={29} height={32} viewBox="0 0 29 32" className="ml-[48px]"><circle cx="12" cy="12" r="10" fill="none" stroke="#222" strokeWidth="2" /><path d="M19 20L28 31" stroke="#222" strokeWidth="3" /></svg>
          <svg width={32} height={32} viewBox="0 0 32 32" className="ml-[35px]"><defs><radialGradient id="sr"><stop offset="0" stopColor="#9ff" /><stop offset=".5" stopColor="#3b5ed0" /><stop offset=".85" stopColor="#a23096" /><stop offset="1" stopColor="#1a2230" /></radialGradient></defs><circle cx="16" cy="16" r="16" fill="url(#sr)" /><path d="M16 6L18 14L26 16L18 18L16 26L14 18L6 16L14 14Z" fill="#fff" opacity=".8" /></svg>
          <svg width={35} height={22} viewBox="0 0 35 22" className="ml-[25px]"><path d="M0 2.5H4M8 2.5H35M0 11H4M8 11H35M0 19.5H4M8 19.5H35" stroke="#222" strokeWidth="4" /></svg>
        </div>
      </div>

      {/* main window */}
      <div className="absolute left-[32px] top-[46px] w-[2794px] h-[1656px] rounded-t-[8px] rounded-b-[8px] overflow-hidden border-b-[3px] border-[#5a5a5a] flex flex-col bg-[#ededed]">
        <div className="relative h-[44px] shrink-0 flex items-center justify-center border-b-2 border-[#b6b6b6] bg-[linear-gradient(180deg,#ece9ea,#d9d7d8)] text-[27px] text-[#222] pt-[4px]">
          <div className="absolute left-[16px] top-[10px] flex gap-[16px]">
            <div className="w-[24px] h-[24px] rounded-full bg-[#d0d0d0] border border-[#bdbdbd]" />
            <div className="w-[24px] h-[24px] rounded-full bg-[#d0d0d0] border border-[#bdbdbd]" />
            <div className="w-[24px] h-[24px] rounded-full bg-[#d0d0d0] border border-[#bdbdbd]" />
          </div>
          Autodesk Fusion 360
        </div>
        {/* toolbar */}
        <div className="h-[60px] shrink-0 border-b-4 border-[#999] bg-[#d8d8d8] flex items-center pl-[24px] pr-[22px] pt-[2px]">
          <svg width={34} height={34} viewBox="0 0 34 34"><path d="M0 0H10V10H0ZM12 0H22V10H12ZM24 0H34V10H24ZM0 12H10V22H0ZM12 12H22V22H12ZM24 12H34V22H24ZM0 24H10V34H0ZM12 24H22V34H12ZM24 24H34V34H24Z" fill="#444" /></svg>
          <svg width={26} height={34} viewBox="0 0 26 34" className="ml-[54px]"><path d="M0 0H12L26 14V34H0Z" fill="#555" /><path d="M14 0L26 12H14Z" fill="#d8d8d8" stroke="#555" /></svg>
          <Tri cls="ml-[12px]" />
          <svg width={32} height={34} viewBox="0 0 32 34" className="ml-[46px]"><path d="M0 2C0 1 1 0 2 0H30C31 0 32 1 32 2V32C32 33 31 34 30 34H6L0 28Z" fill="#555" /><rect x="5" y="4" width="22" height="16" fill="#d8d8d8" /><rect x="10" y="24" width="12" height="10" fill="#d8d8d8" /><rect x="13" y="26" width="4" height="7" fill="#555" /></svg>
          <svg width={33} height={28} viewBox="0 0 33 28" className="ml-[48px]"><path d="M14 0L0 12L14 24V16C22 16 28 18 30 28C34 14 26 8 14 8Z" fill="#8a8a8a" /></svg>
          <Tri cls="ml-[13px]" c="#8a8a8a" />
          <svg width={33} height={28} viewBox="0 0 33 28" className="ml-[25px]"><path d="M19 0L33 12L19 24V16C11 16 5 18 3 28C-1 14 7 8 19 8Z" fill="#8a8a8a" /></svg>
          <Tri cls="ml-[13px]" c="#8a8a8a" />
          <div className="ml-auto flex items-center">
            <svg width={33} height={33} viewBox="0 0 33 33"><circle cx="16.5" cy="16.5" r="14.5" fill="none" stroke="#444" strokeWidth="4" /><path d="M16 8V18H25" fill="none" stroke="#444" strokeWidth="3.5" /></svg>
            <span className={`ml-[57px] text-[23px] text-[#333] ${sans} tracking-[-0.3px]`}>James Island</span>
            <Tri cls="ml-[13px]" w={19} h={14} />
            <svg width={33} height={33} viewBox="0 0 33 33" className="ml-[43px]"><circle cx="16.5" cy="16.5" r="16.5" fill="#777" /><text x="16.5" y="27" textAnchor="middle" fontSize="28" fontWeight="bold" fill="#d8d8d8" fontFamily="Liberation Sans">?</text></svg>
            <Tri cls="ml-[8px]" w={18} h={14} />
          </div>
        </div>
        {/* tabs */}
        <div className={`h-[44px] shrink-0 border-b-2 border-[#aaa] bg-[#d8d8d8] flex text-[25.5px] ${sans}`}>
          <div className="w-[400px] h-full border-r-4 border-[#a0a0a0] flex items-center pl-[20px] text-[#999]">
            <svg width={34} height={32} viewBox="0 0 34 32"><polygon points="0,6 20,0 34,5 34,22 20,32 10,26 0,14" fill="#c9c9c9" stroke="#aaa" /><path d="M0 6L20 8V32M20 8L34 5" stroke="#aaa" fill="none" /></svg>
            <span className="ml-[19px] mt-[6px]">3-ring v1*</span>
            <svg width={20} height={22} viewBox="0 0 20 22" className="ml-auto"><ellipse cx="10" cy="11" rx="8.5" ry="9.5" fill="none" stroke="#45c1a0" strokeWidth="2" /></svg>
            <span className="ml-[17px] mr-[14px] mt-[4px] text-[#777] text-[26px] font-semibold">X</span>
          </div>
          <div className="w-[400px] h-full border-r-4 border-[#a0a0a0] flex items-center pl-[20px] bg-[#e9e9e9] text-[#555]">
            <svg width={34} height={32} viewBox="0 0 34 32"><polygon points="0,6 20,0 34,5 34,22 20,32 10,26 0,14" fill="#6e6e6e" /><polygon points="0,6 20,8 20,32 10,26 0,14" fill="#a8a8a8" /></svg>
            <span className="ml-[19px] mt-[6px] font-semibold tracking-[-0.3px]">Untitled</span>
            <span className="ml-auto mr-[14px] mt-[4px] text-[#777] text-[26px] font-semibold">X</span>
          </div>
          <svg width={24} height={26} viewBox="0 0 24 26" className="ml-[14px] mt-[10px]"><path d="M12 0V26M0 13H24" stroke="#888" strokeWidth="4" /></svg>
        </div>
        {/* canvas */}
        <div className="relative flex-1 bg-[#ededed]">
          <Canvas3D />
          <div className="absolute left-[8px] top-[8px] flex flex-col">
            <Ribbon />
            <div className="mt-[8px]"><Panel title="BROWSER" sign="-" rewind /></div>
            <Tree />
          </div>
          <div className="absolute left-[8px] bottom-[8px]"><Panel title="COMMENTS" sign="+" /></div>
          <NavBar />
          <div className="absolute left-[1626px] top-[740px] h-[35px] w-[363px] bg-[#f8f8f8] border border-[#aaa] border-b-2 shadow-[0_8px_18px_rgba(0,0,0,0.35)] flex items-center justify-center text-black text-[27px] font-['Liberation_Sans',sans-serif] whitespace-nowrap">Select a plane or planar face</div>
        </div>
        {/* timeline */}
        <div className="h-[100px] shrink-0 bg-[linear-gradient(180deg,#cbcbcb,#bdbdbd)] flex items-center pl-[22px] pr-[7px]">
          <svg width={24} height={30} viewBox="0 0 24 30" className="-mt-[16px]"><rect x="0" y="0" width="3" height="30" fill="#555" /><polygon points="24,0 24,30 4,15" fill="#555" /></svg>
          <svg width={26} height={30} viewBox="0 0 26 30" className="ml-[24px] -mt-[16px]"><polygon points="19,0 19,30 0,15" fill="#555" /><rect x="22" y="7" width="4" height="16" fill="#555" /></svg>
          <svg width={24} height={32} viewBox="0 0 24 32" className="ml-[25px] -mt-[16px]"><polygon points="0,0 24,16 0,32" fill="#555" /></svg>
          <svg width={26} height={30} viewBox="0 0 26 30" className="ml-[25px] -mt-[16px]"><polygon points="7,0 7,30 26,15" fill="#555" /><rect x="0" y="7" width="4" height="16" fill="#555" /></svg>
          <svg width={24} height={30} viewBox="0 0 24 30" className="ml-[26px] -mt-[16px]"><rect x="21" y="0" width="3" height="30" fill="#555" /><polygon points="0,0 0,30 20,15" fill="#555" /></svg>
          <svg width={24} height={64} viewBox="0 0 24 64" className="ml-[26px] -mt-[4px]"><polygon points="0,0 24,0 24,10 14,20 14,64 10,64 10,20 0,10" fill="#5f5f5f" /></svg>
          <div className="ml-auto -mt-[20px]"><Gear s={33} /></div>
        </div>
      </div>

      <Dock />
    </div>
  );
}
